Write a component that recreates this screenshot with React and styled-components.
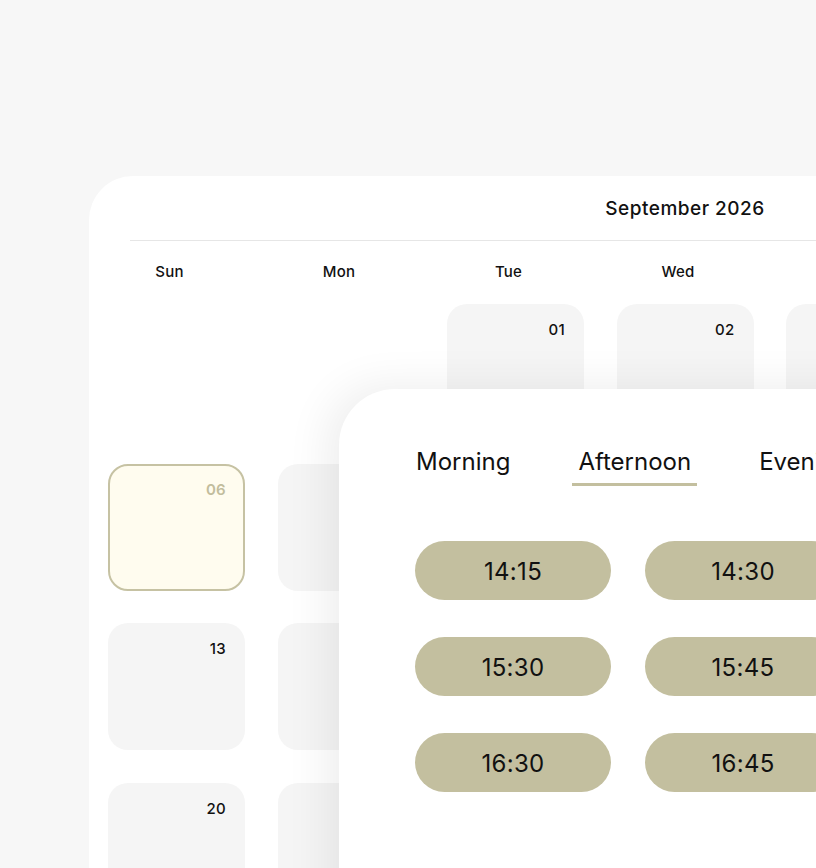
import React from "react";
import styled, { createGlobalStyle } from "styled-components";

const Global = createGlobalStyle`
  html, body { margin: 0; padding: 0; background: #f7f7f7; overflow: hidden; }
  body { font-family: Inter, "Noto Sans", sans-serif; color: #111; }
  * { box-sizing: border-box; }
`;

const Page = styled.div`
  width: 816px;
  height: 868px;
  overflow: hidden;
  position: relative;
  padding: 176px 0 0 89px;
`;

const Card = styled.div`
  position: relative;
  width: 1192px;
  height: 1000px;
  background: #fff;
  border-radius: 44px 44px 0 0;
  padding: 0 19px;
`;

const Header = styled.div`
  height: 65px;
  margin: 0 22px;
  border-bottom: 1px solid #e6e6e6;
  display: flex;
  align-items: center;
  justify-content: center;
  padding-top: 1px;
  font-size: 19px;
  font-weight: 500;
  letter-spacing: 0.5px;
`;

const DayNames = styled.div`
  display: grid;
  grid-template-columns: repeat(7, 137px);
  column-gap: 32.5px;
  margin: 21px 0 22px -7px;
`;

const DayName = styled.div`
  text-align: center;
  font-size: 15px;
  font-weight: 500;
  line-height: 20px;
  letter-spacing: 0.2px;
`;

const Grid = styled.div`
  display: grid;
  grid-template-columns: repeat(7, 137px);
  grid-auto-rows: 127px;
  gap: 32.5px;
`;

const Cell = styled.div`
  border-radius: 20px;
  background: ${(p) => (p.$selected ? "#fffcef" : p.$empty ? "transparent" : "#f5f5f5")};
  border: ${(p) => (p.$selected ? "2px solid #c6c2a3" : "none")};
  display: flex;
  justify-content: flex-end;
  padding: ${(p) => (p.$selected ? "16px 17px" : "18px 19px")};
  font-size: 15px;
  font-weight: ${(p) => (p.$selected ? 600 : 500)};
  color: ${(p) => (p.$selected ? "#c2bd9d" : "#111")};
  line-height: 16px;
  letter-spacing: 0.3px;
`;

const Panel = styled.div`
  position: absolute;
  left: 250px;
  top: 213px;
  width: 900px;
  height: 700px;
  background: #fff;
  border-radius: 56px 0 0 0;
  box-shadow: -12px -4px 44px rgba(0, 0, 0, 0.07);
  padding: 57px 0 0 76px;
`;

const Tabs = styled.div`
  display: flex;
  gap: 56px;
  margin-left: -5px;
`;

const Tab = styled.div`
  padding: 1px 6px 6px;
  font-size: 24px;
  line-height: 30px;
  font-weight: 400;
  border-bottom: 3px solid ${(p) => (p.$active ? "#c3bf9f" : "transparent")};
  white-space: nowrap;
`;

const Slots = styled.div`
  display: grid;
  grid-template-columns: repeat(3, 196px);
  grid-auto-rows: 59px;
  column-gap: 34px;
  row-gap: 37px;
  margin-top: 55px;
`;

const Slot = styled.div`
  background: #c3bf9f;
  border-radius: 30px;
  display: flex;
  align-items: center;
  justify-content: center;
  padding-top: 1px;
  font-size: 24px;
  letter-spacing: 0.3px;
  color: #111;
`;

const days = ["Sun", "Mon", "Tue", "Wed", "Thu", "Fri", "Sat"];
const cells = [null, null, ...Array.from({ length: 30 }, (_, i) => i + 1)];
const slots = ["14:15", "14:30", "14:45", "15:30", "15:45", "16:00", "16:30", "16:45", "17:00"];

export default function App() {
  return (
    <>
      <Global />
      <Page>
        <Card>
          <Header>September 2026</Header>
          <DayNames>
            {days.map((d) => (
              <DayName key={d}>{d}</DayName>
            ))}
          </DayNames>
          <Grid>
            {cells.map((n, i) =>
              n === null ? (
                <Cell key={i} $empty />
              ) : (
                <Cell key={i} $selected={n === 6}>
                  {String(n).padStart(2, "0")}
                </Cell>
              )
            )}
          </Grid>
          <Panel>
            <Tabs>
              <Tab>Morning</Tab>
              <Tab $active>Afternoon</Tab>
              <Tab>Evening</Tab>
            </Tabs>
            <Slots>
              {slots.map((s) => (
                <Slot key={s}>{s}</Slot>
              ))}
            </Slots>
          </Panel>
        </Card>
      </Page>
    </>
  );
}
